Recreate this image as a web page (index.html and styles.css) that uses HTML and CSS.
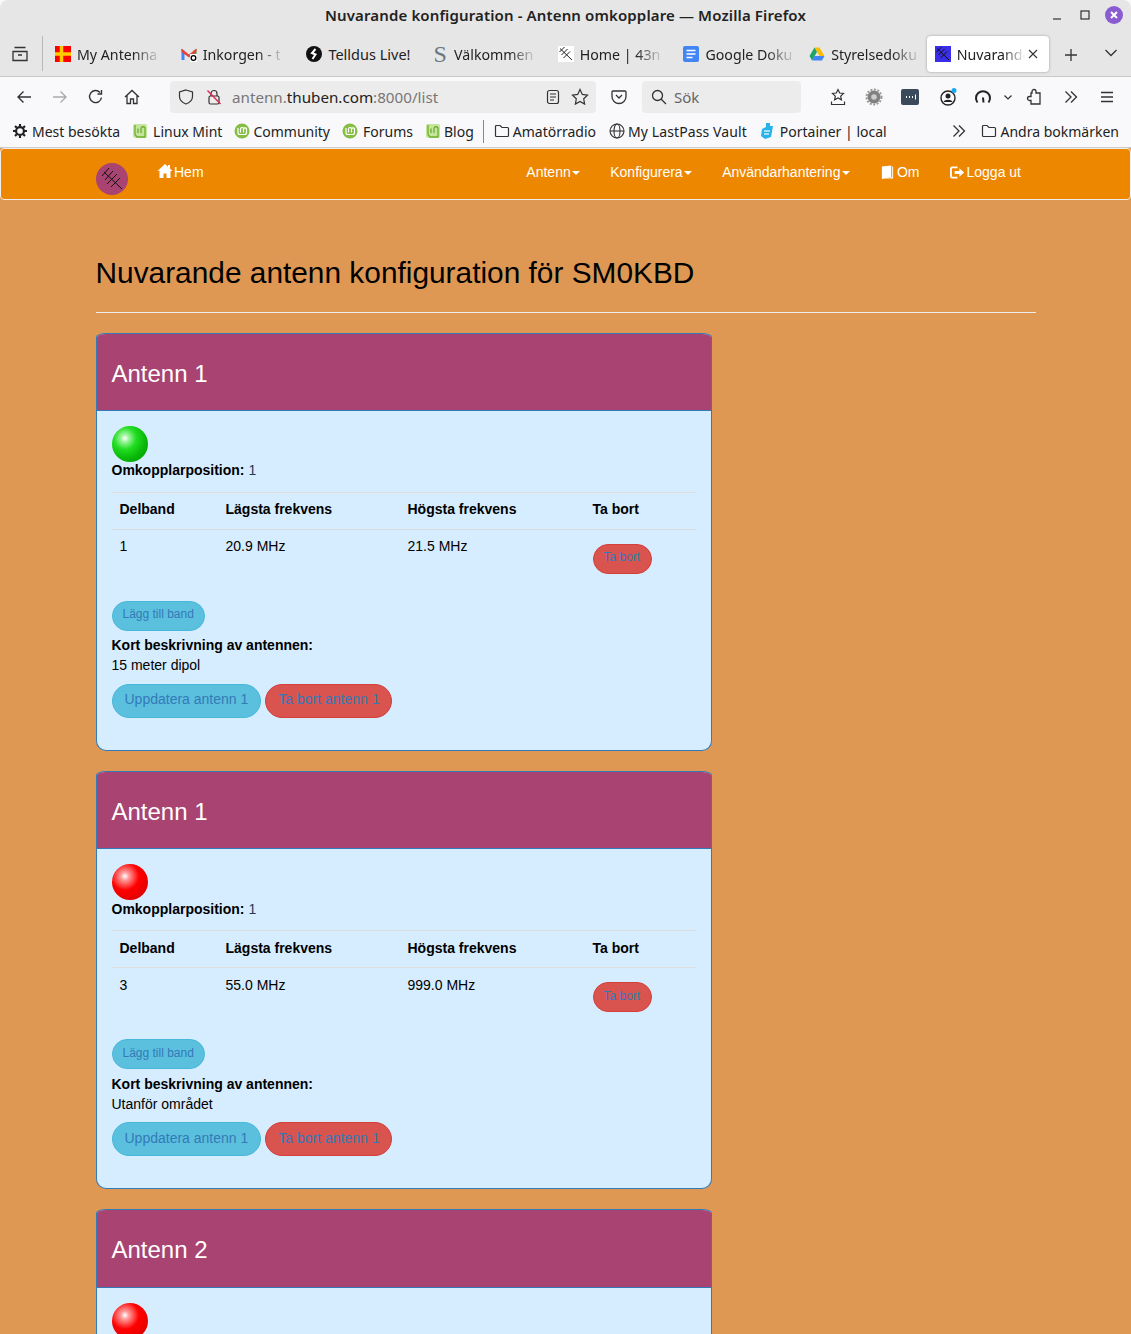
FILE: index.html
```html
<!DOCTYPE html>
<html lang="sv">
<head>
<meta charset="utf-8">
<title>Nuvarande konfiguration - Antenn omkopplare</title>
<link rel="stylesheet" href="styles.css">
</head>
<body>
<svg class="defs" width="0" height="0" aria-hidden="true">
  <defs>
    <symbol id="ant" viewBox="0 0 16 16"><path d="M2 2.5 14 14M6.5 1 1.5 6M9.5 3 3.5 9M12 5.5 5.5 12" fill="none" stroke="currentColor" stroke-width="1"/></symbol>
    <symbol id="mint" viewBox="0 0 16 16"><circle cx="8" cy="8" r="7.5" fill="#86be43"/><path d="M4 5v4.5a2 2 0 0 0 2 2h4.5a2 2 0 0 0 2-2V6a1.6 1.6 0 0 0-3 0v3.5M6.5 9.5V6a1.5 1.5 0 0 1 3 0" fill="none" stroke="#fff" stroke-width="1.2"/></symbol>
    <symbol id="mints" viewBox="0 0 16 16"><rect x="1" y="1" width="14" height="14" rx="2" fill="#c5e59c"/><path d="M3 2v9.5L5 14h8V6a2 2 0 0 0-4-.5V10M6 10V5.5" fill="none" stroke="#6fae2f" stroke-width="1.3"/></symbol>
    <symbol id="folder" viewBox="0 0 16 16"><path d="M1.5 3.5A1 1 0 0 1 2.500 2.500h3.500l2 2h5.500a1 1 0 0 1 1 1v7a1 1 0 0 1-1 1h-11a1 1 0 0 1-1-1z" fill="none" stroke="#333" stroke-width="1.2"/></symbol>
    <symbol id="dbl" viewBox="0 0 16 16"><path d="M2.500 2.500 8 8l-5.500 5.500M8 2.500 13.500 8 8 13.500" fill="none" stroke="#333" stroke-width="1.3"/></symbol>
    <symbol id="logo" viewBox="0 0 32 32"><circle cx="16" cy="16" r="16" fill="#a84372"/><path d="M8 9 26 26M13 5 6 13M17 8 9 17M21 11 11 21M24 15 15 24" fill="none" stroke="#111" stroke-width="1"/></symbol>
  </defs>
</svg>

<div class="window">
  <header class="chrome">
    <div class="titlebar">
      <span class="wintitle">Nuvarande konfiguration - Antenn omkopplare — Mozilla Firefox</span>
      <div class="winbtns">
        <svg class="ic16" viewBox="0 0 16 16"><path d="M4 12h8" stroke="#333" stroke-width="1.2"/></svg>
        <svg class="ic16" viewBox="0 0 16 16"><rect x="4" y="4" width="8" height="8" fill="none" stroke="#333" stroke-width="1.2"/></svg>
        <svg class="ic18" viewBox="0 0 18 18"><circle cx="9" cy="9" r="9" fill="#8a5cd1"/><path d="M6 6l6 6M12 6l-6 6" stroke="#fff" stroke-width="2"/></svg>
      </div>
    </div>

    <div class="tabbar">
      <div class="viewcell">
        <svg class="ic18" viewBox="0 0 18 18"><path d="M3.500 2.500h11M2 6.500h14v9H2zM7 10h4" fill="none" stroke="#333" stroke-width="1.3"/></svg>
      </div>
      <div class="tabs">
        <div class="tab">
          <svg class="ic16" viewBox="0 0 16 16"><rect width="16" height="16" fill="#f00"/><path d="M6.500 0v16M0 8h16" stroke="#fc0" stroke-width="3.500"/></svg>
          <span class="tablabel">My Antenna</span>
        </div>
        <div class="tab">
          <svg class="ic16" viewBox="0 0 16 16"><path d="M0.500 14V3L3.500 4.500V14z" fill="#4285f4"/><path d="M15.500 14V3L12.500 4.500V14z" fill="#34a853"/><path d="M0.500 2.500 8 8.500 15.500 2.500V6L8 11.500 0.500 6z" fill="#ea4335"/><rect x="9" y="8" width="7" height="8" fill="#fff"/><circle cx="12.500" cy="12" r="2.300" fill="none" stroke="#000" stroke-width="1.300"/></svg>
          <span class="tablabel">Inkorgen - t</span>
        </div>
        <div class="tab">
          <svg class="ic16" viewBox="0 0 16 16"><circle cx="8" cy="8" r="8" fill="#111"/><path d="M9.500 3 6 7l3.500 1.500L6.500 13" fill="none" stroke="#fff" stroke-width="2"/></svg>
          <span class="tablabel tablabel-full">Telldus Live!</span>
        </div>
        <div class="tab">
          <span class="sicon">S</span>
          <span class="tablabel">Välkommen</span>
        </div>
        <div class="tab">
          <svg class="ic16 anthome"><use href="#ant"/></svg>
          <span class="tablabel">Home | 43n</span>
        </div>
        <div class="tab">
          <svg class="ic16" viewBox="0 0 16 16"><rect width="16" height="16" rx="2" fill="#4285f4"/><path d="M3.500 4.500h9M3.500 8h9M3.500 11.500h6" stroke="#fff" stroke-width="1.500"/></svg>
          <span class="tablabel">Google Doku</span>
        </div>
        <div class="tab">
          <svg class="ic16" viewBox="0 0 16 16"><path d="M5.500 1.500h5L15.500 10H10.500z" fill="#fbbc04"/><path d="M5.500 1.500 0.500 10 3 14.500 8 6z" fill="#1fa463"/><path d="M3 14.500h10l2.500-4.500H5.500z" fill="#4285f4"/></svg>
          <span class="tablabel">Styrelsedoku</span>
        </div>
        <div class="tab tab-active">
          <svg class="ic16 antactive"><use href="#ant"/></svg>
          <span class="tablabel tablabel-active">Nuvarande</span>
          <svg class="ic12 tabclose" viewBox="0 0 12 12"><path d="M2 2l8 8M10 2l-8 8" stroke="#333" stroke-width="1.100"/></svg>
        </div>
      </div>
      <div class="newtab">
        <svg class="ic16" viewBox="0 0 16 16"><path d="M8 2v12M2 8h12" stroke="#333" stroke-width="1.300"/></svg>
      </div>
      <div class="tablist">
        <svg class="ic16" viewBox="0 0 16 16"><path d="M2.500 5 8 10.500 13.500 5" fill="none" stroke="#333" stroke-width="1.300"/></svg>
      </div>
    </div>

    <nav class="toolbar">
      <div class="tbtn"><svg class="ic16" viewBox="0 0 16 16"><path d="M15 8H2M7.500 2.500 2 8l5.500 5.500" fill="none" stroke="#333" stroke-width="1.400"/></svg></div>
      <div class="tbtn"><svg class="ic16" viewBox="0 0 16 16"><path d="M1 8h13M8.500 2.500 14 8l-5.500 5.500" fill="none" stroke="#aaa" stroke-width="1.400"/></svg></div>
      <div class="tbtn"><svg class="ic16" viewBox="0 0 16 16"><path d="M13.500 8.500A6 6 0 1 1 12 3.500M13.500 1v4h-4" fill="none" stroke="#333" stroke-width="1.400"/></svg></div>
      <div class="tbtn"><svg class="ic16" viewBox="0 0 16 16"><path d="M1 8l7-6.500L15 8M3 6.500V14.500H6.500V10h3v4.500H13V6.500" fill="none" stroke="#333" stroke-width="1.300"/></svg></div>

      <div class="urlbar">
        <svg class="ic16" viewBox="0 0 16 16"><path d="M8 1l6.500 2v4.500c0 3.500-2.500 6-6.500 7.500-4-1.500-6.500-4-6.500-7.500V3z" fill="none" stroke="#333" stroke-width="1.200"/></svg>
        <svg class="ic16 lock" viewBox="0 0 16 16"><rect x="3" y="7" width="10" height="8" rx="1.500" fill="none" stroke="#333" stroke-width="1.200"/><path d="M5 7V4.500a3 3 0 0 1 6 0V7" fill="none" stroke="#333" stroke-width="1.200"/><path d="M1.500 1.500 14.500 15" stroke="#e22850" stroke-width="1.400"/></svg>
        <span class="urltext">antenn.<span class="urlhost">thuben.com</span>:8000/list</span>
        <svg class="ic16 reader" viewBox="0 0 16 16"><rect x="2.500" y="1.500" width="11" height="13" rx="2" fill="none" stroke="#333" stroke-width="1.200"/><path d="M5 5h6M5 8h6M5 11h4" stroke="#333" stroke-width="1.200"/></svg>
        <svg class="ic18 star" viewBox="0 0 18 18"><path d="M9 1.500l2.300 4.900 5.200.7-3.800 3.700.9 5.300L9 13.500l-4.600 2.600.9-5.300L1.500 7.100l5.200-.7z" fill="none" stroke="#333" stroke-width="1.200"/></svg>
      </div>

      <div class="tbtn tbtn-pocket"><svg class="ic16" viewBox="0 0 16 16"><path d="M2 2h12a1 1 0 0 1 1 1v4.500a7 7 0 0 1-14 0V3a1 1 0 0 1 1-1z" fill="none" stroke="#333" stroke-width="1.300"/><path d="M5 6l3 3 3-3" fill="none" stroke="#333" stroke-width="1.300"/></svg></div>

      <div class="searchbar">
        <svg class="ic16" viewBox="0 0 16 16"><circle cx="6.500" cy="6.500" r="5" fill="none" stroke="#333" stroke-width="1.300"/><path d="M10 10l5 5" stroke="#333" stroke-width="1.300"/></svg>
        <span class="searchtext">Sök</span>
      </div>

      <div class="tbtn tbtn-first"><svg class="ic18" viewBox="0 0 18 18"><path d="M9 1.500l1.700 3.500 3.800.5-2.800 2.600.7 3.700L9 10l-3.400 1.800.7-3.700L3.500 5.500l3.800-.5zM2.500 13.500v3h13v-3" fill="none" stroke="#333" stroke-width="1.200"/></svg></div>
      <div class="tbtn"><svg class="ic18" viewBox="0 0 18 18"><circle cx="9" cy="9" r="6.500" fill="#808080"/><circle cx="9" cy="9" r="7.500" fill="none" stroke="#999" stroke-width="2" stroke-dasharray="2 1.500"/><circle cx="9" cy="9" r="2.800" fill="#ccc"/></svg></div>
      <div class="tbtn"><svg class="ic18" viewBox="0 0 18 18"><rect width="18" height="16" y="1" rx="2" fill="#3a4a5a"/><path d="M5 9h1M8 9h1M11 9h1" stroke="#fff" stroke-width="2"/><path d="M14.500 6.500v5" stroke="#fff" stroke-width="1"/></svg></div>
      <div class="tbtn tbtn-prof"><svg class="ic18" viewBox="0 0 18 18"><circle cx="9" cy="10" r="7" fill="none" stroke="#222" stroke-width="1.400"/><circle cx="9" cy="8" r="2.500" fill="#222"/><path d="M4.500 14c1-3 8-3 9 0z" fill="#222"/><circle cx="15" cy="2.500" r="2.500" fill="#1aa9f0"/></svg></div>
      <div class="tbtn tbtn-gauge"><svg class="ic18" viewBox="0 0 18 18"><path d="M3.500 14.500a7 7 0 1 1 11 0" fill="none" stroke="#222" stroke-width="2"/><path d="M9 9.500l.5 5" stroke="#222" stroke-width="2"/></svg></div>
      <div class="tbtn-chev"><svg class="ic10" viewBox="0 0 10 10"><path d="M1.500 3.500 5 7l3.500-3.500" fill="none" stroke="#333" stroke-width="1.200"/></svg></div>
      <div class="tbtn tbtn-ext"><svg class="ic18" viewBox="0 0 18 18"><path d="M7 3.500a2 2 0 0 1 4 0V5h4v11H6v-3.500H4.500a2 2 0 0 1 0-4H6V5h1z" fill="none" stroke="#333" stroke-width="1.300" transform="translate(-1 0)"/></svg></div>
      <div class="tbtn"><svg class="ic16"><use href="#dbl"/></svg></div>
      <div class="tbtn"><svg class="ic16" viewBox="0 0 16 16"><path d="M2 3.500h12M2 8h12M2 12.500h12" stroke="#333" stroke-width="1.300"/></svg></div>
    </nav>

    <div class="bookmarks">
      <div class="bm"><svg class="ic14" viewBox="0 0 16 16"><circle cx="8" cy="8" r="4.500" fill="none" stroke="#222" stroke-width="2.500"/><path d="M8 0v3M8 13v3M0 8h3M13 8h3M2.300 2.300l2 2M11.700 11.700l2 2M2.300 13.700l2-2M11.700 4.300l2-2" stroke="#222" stroke-width="2.400"/></svg>Mest besökta</div>
      <div class="bm"><svg class="ic16"><use href="#mints"/></svg>Linux Mint</div>
      <div class="bm bm-tight"><svg class="ic16"><use href="#mint"/></svg>Community</div>
      <div class="bm"><svg class="ic16"><use href="#mint"/></svg>Forums</div>
      <div class="bm bm-tight"><svg class="ic16"><use href="#mints"/></svg>Blog</div>
      <div class="bmsep"></div>
      <div class="bm bm-tight bm-amat"><svg class="ic16"><use href="#folder"/></svg>Amatörradio</div>
      <div class="bm bm-tight bm-lp"><svg class="ic16" viewBox="0 0 16 16"><circle cx="8" cy="8" r="7" fill="none" stroke="#333" stroke-width="1.100"/><ellipse cx="8" cy="8" rx="3" ry="7" fill="none" stroke="#333" stroke-width="1.100"/><path d="M1 8h14" stroke="#333" stroke-width="1.100"/></svg>My LastPass Vault</div>
      <div class="bm"><svg class="ic16" viewBox="0 0 16 16"><path d="M7 0h4v3h3L12 14l-6 2-4-3 1-7 4-2z" fill="#25b3e8"/><path d="M5 8h6M5 11h5" stroke="#cdeefb" stroke-width="1.300"/></svg>Portainer | local</div>
      <div class="bmmore"><svg class="ic16"><use href="#dbl"/></svg></div>
      <div class="bm bm-last"><svg class="ic16"><use href="#folder"/></svg>Andra bokmärken</div>
    </div>
  </header>

  <div class="page">
    <div class="navbar">
      <div class="nav-left">
        <svg class="brand"><use href="#logo"/></svg>
        <a class="navlink"><svg class="glyph glyph-home" viewBox="0 0 16 16"><path d="M8 1 0.500 8H2.500V15H6.500V10.500H9.500V15H13.500V8H15.500L13 5.600V2H11V3.700z" fill="#fff"/></svg>Hem</a>
      </div>
      <div class="nav-right">
        <a class="navlink">Antenn<span class="caret"></span></a>
        <a class="navlink">Konfigurera<span class="caret"></span></a>
        <a class="navlink">Användarhantering<span class="caret"></span></a>
        <a class="navlink"><svg class="glyph" viewBox="0 0 16 16"><path d="M2 1.500 12 0.500V13L2 15z" fill="#fff"/><path d="M13 1.500h1V14.500H4L13 13z" fill="#fff"/></svg>Om</a>
        <a class="navlink"><svg class="glyph" viewBox="0 0 16 16"><path d="M8 2.500H2.500A1.500 1.500 0 0 0 1 4v8a1.500 1.500 0 0 0 1.500 1.500H8" fill="none" stroke="#fff" stroke-width="2"/><path d="M5 6.500h5V3.500l5 4.500-5 4.500v-3H5z" fill="#fff"/></svg>Logga ut</a>
      </div>
    </div>

    <main class="container">
      <h1 class="pagetitle">Nuvarande antenn konfiguration för SM0KBD</h1>
      <hr class="rule">

      <section class="panel">
        <div class="panel-heading"><h2 class="panel-title">Antenn 1</h2></div>
        <div class="panel-body">
          <div class="ball ball-green"></div>
          <p class="position"><strong>Omkopplarposition:</strong> <span class="posval">1</span></p>
          <table class="bands">
            <tr><th class="c1">Delband</th><th class="c2">Lägsta frekvens</th><th class="c3">Högsta frekvens</th><th class="c4">Ta bort</th></tr>
            <tr><td>1</td><td>20.9 MHz</td><td>21.5 MHz</td><td><a class="btn btn-sm btn-danger btn-cell">Ta bort</a></td></tr>
          </table>
          <a class="btn btn-sm btn-info">Lägg till band</a>
          <p class="desc"><strong>Kort beskrivning av antennen:</strong><br>15 meter dipol</p>
          <div class="actions"><a class="btn btn-info">Uppdatera antenn 1</a><a class="btn btn-danger">Ta bort antenn 1</a></div>
        </div>
      </section>

      <section class="panel">
        <div class="panel-heading"><h2 class="panel-title">Antenn 1</h2></div>
        <div class="panel-body">
          <div class="ball ball-red"></div>
          <p class="position"><strong>Omkopplarposition:</strong> <span class="posval">1</span></p>
          <table class="bands">
            <tr><th class="c1">Delband</th><th class="c2">Lägsta frekvens</th><th class="c3">Högsta frekvens</th><th class="c4">Ta bort</th></tr>
            <tr><td>3</td><td>55.0 MHz</td><td>999.0 MHz</td><td><a class="btn btn-sm btn-danger btn-cell">Ta bort</a></td></tr>
          </table>
          <a class="btn btn-sm btn-info">Lägg till band</a>
          <p class="desc"><strong>Kort beskrivning av antennen:</strong><br>Utanför området</p>
          <div class="actions"><a class="btn btn-info">Uppdatera antenn 1</a><a class="btn btn-danger">Ta bort antenn 1</a></div>
        </div>
      </section>

      <section class="panel">
        <div class="panel-heading"><h2 class="panel-title">Antenn 2</h2></div>
        <div class="panel-body">
          <div class="ball ball-red"></div>
        </div>
      </section>
    </main>
  </div>
</div>
</body>
</html>
```

FILE: styles.css
```css
* { box-sizing: border-box; }
html, body { margin: 0; padding: 0; height: 1334px; overflow: hidden; }
body { background: #de9854; }
.defs { display: block; height: 0; }
.window { height: 1334px; overflow: hidden; display: flex; flex-direction: column; background: #de9854; }

/* Browser chrome */
.chrome { flex: none; height: 148px; background: #f9f9fb; color: #222; font-family: "Noto Sans", sans-serif; font-size: 14px; display: flex; flex-direction: column; }
.ic10 { width: 10px; height: 10px; flex: none; }
.ic12 { width: 12px; height: 12px; flex: none; }
.ic14 { width: 14px; height: 14px; flex: none; }
.ic16 { width: 16px; height: 16px; flex: none; }
.ic18 { width: 18px; height: 18px; flex: none; }

.titlebar { height: 32px; padding-bottom: 2px; background: #e6e6e6; display: flex; align-items: center; justify-content: center; position: relative; border-radius: 8px 8px 0 0; }
.wintitle { font-weight: 600; font-size: 15px; letter-spacing: .13px; color: #222; }
.winbtns { position: absolute; right: 8px; top: 6px; display: flex; align-items: center; gap: 12px; }

.tabbar { height: 45px; background: #e6e6e6; border-bottom: 1px solid #c8c8c8; display: flex; align-items: flex-start; }
.viewcell { width: 43px; height: 35px; margin-top: 4px; border-right: 1px solid #b8b8b8; padding: 9px 0 0 11px; flex: none; }
.tabs { display: flex; flex: none; padding-left: 4px; }
.tab { width: 125.7px; height: 36px; padding: 0 0 0 8px; display: flex; align-items: center; gap: 6px; flex: none; margin-top: 4px; }
.tablabel { flex: none; font-size: 14.2px; white-space: nowrap; -webkit-mask-image: linear-gradient(90deg, #000 70%, rgba(0,0,0,.15) 100%); mask-image: linear-gradient(90deg, #000 70%, rgba(0,0,0,.15) 100%); }
.tablabel-full { font-size: 14.5px; -webkit-mask-image: none; mask-image: none; }
.tablabel-active { -webkit-mask-image: linear-gradient(90deg, #000 62%, rgba(0,0,0,0) 92%); mask-image: linear-gradient(90deg, #000 62%, rgba(0,0,0,0) 92%); }
.sicon { width: 16px; font-family: "Liberation Serif", serif; font-size: 24px; line-height: 16px; color: #6a7680; text-align: center; flex: none; }
.anthome { background: #fff; color: #222; }
.antactive { background: #3a2ee8; color: #111; }
.tab-active { width: 122px; background: #fff; border-radius: 4px; box-shadow: 0 0 3px rgba(0,0,0,.3); color: #222; }
.tabclose { margin-left: -10px; }
.newtab { flex: none; margin: 15px 0 0 14px; }
.tablist { flex: none; margin: 13px 0 0 24px; }

.toolbar { height: 40px; background: #f9f9fb; display: flex; align-items: center; padding-left: 6px; }
.tbtn { width: 36px; height: 32px; display: flex; align-items: center; justify-content: center; flex: none; }
.tbtn-pocket { margin: 0 5px 0 5px; }
.tbtn-first { margin-left: 19px; }
.tbtn-prof { margin-left: 2px; }
.tbtn-gauge { margin-left: -1px; }
.tbtn-chev { width: 14px; display: flex; justify-content: center; flex: none; }
.tbtn-ext { margin-left: 2px; }
.urlbar { width: 426px; height: 32px; margin-left: 20px; background: #ececec; border-radius: 4px; display: flex; align-items: center; padding-left: 8px; flex: none; }
.lock { margin-left: 12px; }
.urltext { margin-left: 10px; color: #777; font-size: 15.2px; flex: 1; white-space: nowrap; }
.urlhost { color: #222; }
.reader { margin-right: 10px; }
.star { margin-right: 7px; }
.searchbar { width: 159px; height: 32px; background: #ececec; border-radius: 4px; display: flex; align-items: center; padding-left: 9px; gap: 7px; flex: none; }
.searchtext { color: #666; font-size: 15px; }

.bookmarks { height: 31px; background: #f9f9fb; border-bottom: 1px solid #ccc; display: flex; align-items: center; padding: 0 12px 2px 13px; }
.bm { display: flex; align-items: center; gap: 5px; margin-right: 12px; white-space: nowrap; flex: none; color: #222; }
.bm-tight { gap: 3px; }
.bm-amat { margin-right: 13px; }
.bm-lp { letter-spacing: .1px; }
.bmsep { width: 1px; height: 23px; background: #888; margin: 0 10px 0 -3px; flex: none; }
.bmmore { margin-left: auto; margin-right: 14px; display: flex; }
.bm-last { margin-right: 0; gap: 3px; }

/* Web page */
.page { flex: 1; font-family: "Liberation Sans", Arial, sans-serif; font-size: 14px; line-height: 20px; color: #000; min-height: 0; }
.navbar { height: 52px; background: #ee8700; border: 1px solid #eee; border-radius: 4px; display: flex; justify-content: space-between; padding: 0 95px; }
.nav-left, .nav-right { display: flex; align-items: flex-start; }
.nav-right { margin-right: -1px; }
.brand { width: 32px; height: 32px; margin: 14px 15px 0 0; color: #111; flex: none; }
.navlink { display: flex; align-items: center; color: #fff; padding: 13px 15px; height: 46px; white-space: nowrap; }
.glyph { width: 15px; height: 15px; margin-right: 2px; flex: none; }
.glyph-home { width: 16px; height: 16px; margin: -2px 1px 0 -1px; }
.caret { width: 0; height: 0; margin-left: 1.500px; margin-top: 1px; border-top: 4px solid #fff; border-left: 4px solid transparent; border-right: 4px solid transparent; }

.container { width: 970px; margin: 0 auto; padding: 0 15px; }
.pagetitle { font-size: 29.85px; font-weight: 400; line-height: 33px; margin: 56px 0 0; color: #000; }
.rule { border: 0; border-top: 1px solid #eee; margin: 23px 0 19.8px; }

.panel { width: 616px; background: #d6edff; border: 1px solid #337ab7; border-radius: 10px 10px 10px 10px / 4px 4px 10px 10px; margin-bottom: 20px; height: 418.3px; overflow: hidden; }
.panel-heading { background: #a84372; color: #fff; padding: 27px 15px 0; height: 77.3px; border-bottom: 1px solid #337ab7; }
.panel-title { font-size: 24px; font-weight: 400; line-height: 26px; margin: 0; }
.panel-body { padding: 15px; }
.ball { width: 36px; height: 36px; border-radius: 50%; }
.ball-green { background: radial-gradient(circle at 36% 34%, #fff 0, #9af59a 12%, #22dd22 34%, #08b808 62%, #048f04 100%); }
.ball-red { background: radial-gradient(circle at 36% 34%, #fff 0, #ff9c9c 12%, #ff0000 42%, #e60000 72%, #b80000 100%); }
.position { margin: -1.8px 0 11.8px; color: #000; }
.posval { color: #243a5a; }

.bands { width: 584px; border-collapse: collapse; margin-bottom: 19px; }
.bands th, .bands td { padding: 6.3px 8px 8px; text-align: left; vertical-align: top; border-top: 1px solid #ddd; line-height: 20px; }
.bands th { padding-bottom: 9.7px; border-bottom: 1px solid #ddd; }
.c1 { width: 106px; }
.c2 { width: 182px; }
.c3 { width: 185px; }
.c4 { width: 111px; }

.btn { display: inline-block; color: #337ab7; border-radius: 17px; padding: 4.3px 12px 7.7px; font-size: 14px; line-height: 20px; border: 1px solid transparent; white-space: nowrap; }
.btn-sm { font-size: 12px; padding: 3.3px 10px 6.7px; line-height: 18px; border-radius: 15px; }
.btn-info { background: #5bc0de; border-color: #46b8da; }
.btn-danger { background: #d9534f; border-color: #d43f3a; }
.btn-cell { margin-top: 7.7px; padding-right: 11px; vertical-align: top; }
.desc { margin: 4.3px 0 8.7px; }
.actions { display: flex; gap: 4px; }
```
